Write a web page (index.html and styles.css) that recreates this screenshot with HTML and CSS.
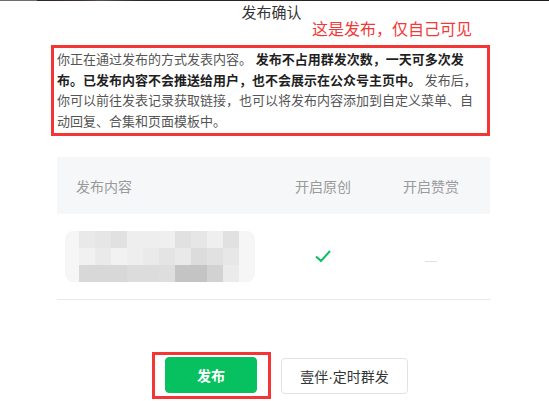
FILE: index.html
```html
<!DOCTYPE html>
<html lang="zh-CN">
<head>
<meta charset="utf-8">
<title>发布确认</title>
<link rel="stylesheet" href="styles.css">
</head>
<body>
<div class="strip"></div>
<div class="dialog">
  <h1 class="title">发布确认</h1>
  <div class="note">这是发布，仅自己可见</div>
  <div class="mark-box">
    <p class="desc"><span>你正在通过发布的方式发表内容。</span> <b>发布不占用群发次数，一天可多次发</b><b>布。已发布内容不会推送给用户，也不会展示在公众号主页中。</b> <span>发布后，</span><span>你可以前往发表记录获取链接，也可以将发布内容添加到自定义菜单、自动回复、合集和页面模板中。</span></p>
  </div>

  <div class="table">
    <div class="thead">
      <div class="th th-content">发布内容</div>
      <div class="th"><span class="cell-inner">开启原创</span></div>
      <div class="th"><span class="cell-inner">开启赞赏</span></div>
    </div>
    <div class="trow">
      <div class="td td-content">
        <div class="mosaic">
          <i class="f"></i><i style="background:#e9e9e9"></i><i style="background:#e6e6e6"></i><i style="background:#e1e1e1"></i><i style="background:#eeeeee"></i><i style="background:#eeeeee"></i><i style="background:#efefef"></i><i style="background:#e1e1e1"></i><i style="background:#e6e6e6"></i><i style="background:#efefef"></i><i style="background:#e1e1e1"></i><i class="f"></i>
          <i class="f"></i><i style="background:#f1f1f1"></i><i style="background:#eaeaea"></i><i style="background:#f2f2f2"></i><i style="background:#eeeeee"></i><i style="background:#eaeaea"></i><i style="background:#e4e4e4"></i><i style="background:#e9e9e9"></i><i style="background:#dcdcdc"></i><i style="background:#e1e1e1"></i><i style="background:#e7e7e7"></i><i class="f"></i>
          <i class="f"></i><i style="background:#d8d8d8"></i><i style="background:#d8d8d8"></i><i style="background:#d8d8d8"></i><i style="background:#dcdcdc"></i><i style="background:#dcdcdc"></i><i style="background:#dedede"></i><i style="background:#c4c4c4"></i><i style="background:#c4c4c4"></i><i style="background:#d2d2d2"></i><i style="background:#ebebeb"></i><i class="f"></i>
        </div>
      </div>
      <div class="td"><span class="cell-inner">
        <svg class="check" viewBox="0 0 16 12" width="16" height="12"><path d="M1 6.5 L6 11 L15 1" fill="none" stroke="#07c160" stroke-width="2"/></svg>
      </span></div>
      <div class="td"><span class="cell-inner"><span class="dash"></span></span></div>
    </div>
  </div>

  <div class="actions">
    <div class="mark-btn"><button class="btn btn-primary">发布</button></div>
    <button class="btn btn-default">壹伴<span class="dot">·</span>定时群发</button>
  </div>
</div>
</body>
</html>
```

FILE: styles.css
```css
* { box-sizing: border-box; }
html, body {
  margin: 0;
  padding: 0;
  background: #fff;
  width: 549px;
  height: 401px;
  overflow: hidden;
  font-family: "Liberation Sans", "Noto Sans CJK SC", sans-serif;
}
.strip {
  height: 1px;
  background: linear-gradient(to right, #6e6e6e 0, #6e6e6e 37px, #2c2520 37px, #3a2f30 80px, #57504a 100px, #2b2724 140px, #1e1b18 100%);
}
.title {
  margin: 3px 0 0;
  font-size: 15px;
  font-weight: normal;
  line-height: 18px;
  color: #353535;
  text-align: center;
  padding-right: 6px;
}
.note {
  margin-top: -1px;
  padding-left: 312px;
  font-size: 16px;
  line-height: 18px;
  color: #f43838;
}
.mark-box {
  margin: 6px 0 0 51px;
  width: 439px;
  border: 3px solid #f43535;
  padding: 2px 6px 1px 3px;
}
.desc {
  margin: 0;
  font-size: 13px;
  line-height: 20.5px;
  color: #555;
}
.desc b {
  color: #1f1f1f;
  font-weight: bold;
}
.table {
  margin: 21px 0 0 57px;
  width: 433px;
}
.thead, .trow {
  display: grid;
  grid-template-columns: 238px 108px 87px;
  align-items: center;
}
.thead {
  height: 57px;
  background: #f6f7f9;
}
.th {
  font-size: 14px;
  color: #9a9a9a;
  white-space: nowrap;
}
.th-content { padding-left: 19px; }
.cell-inner {
  display: inline-flex;
  width: 56px;
  justify-content: center;
  align-items: center;
  white-space: nowrap;
}
.trow {
  height: 86px;
  border-bottom: 1px solid #e7e8eb;
}
.td-content { padding-left: 8px; }
.mosaic {
  display: grid;
  grid-template-columns: 14px repeat(10, 16px) 16px;
  grid-template-rows: repeat(3, 17px);
  width: 190px;
  border-radius: 8px;
  overflow: hidden;
  filter: blur(0.4px);
}
.mosaic i { display: block; }
.mosaic i.f { background: #f6f6f6; }
.check { display: block; }
.dash {
  display: block;
  width: 12px;
  height: 1px;
  background: #e0e0e0;
}
.actions {
  display: flex;
  align-items: center;
  margin: 52px 0 0 152px;
  gap: 10px;
}
.mark-btn {
  border: 3px solid #f43535;
  padding: 2px 11px 3px 10px;
}
.btn {
  font-family: "Liberation Sans", "Noto Sans CJK SC", sans-serif;
  font-size: 14px;
  height: 36px;
  border-radius: 4px;
  cursor: pointer;
  padding: 0;
}
.btn-primary {
  width: 92px;
  background: #07c160;
  border: 1px solid #07c160;
  color: #fff;
  font-weight: bold;
}
.btn-default {
  width: 127px;
  background: #fff;
  border: 1px solid #e2e2e2;
  color: #353535;
}
.dot { font-family: "Liberation Sans", sans-serif; }
```
